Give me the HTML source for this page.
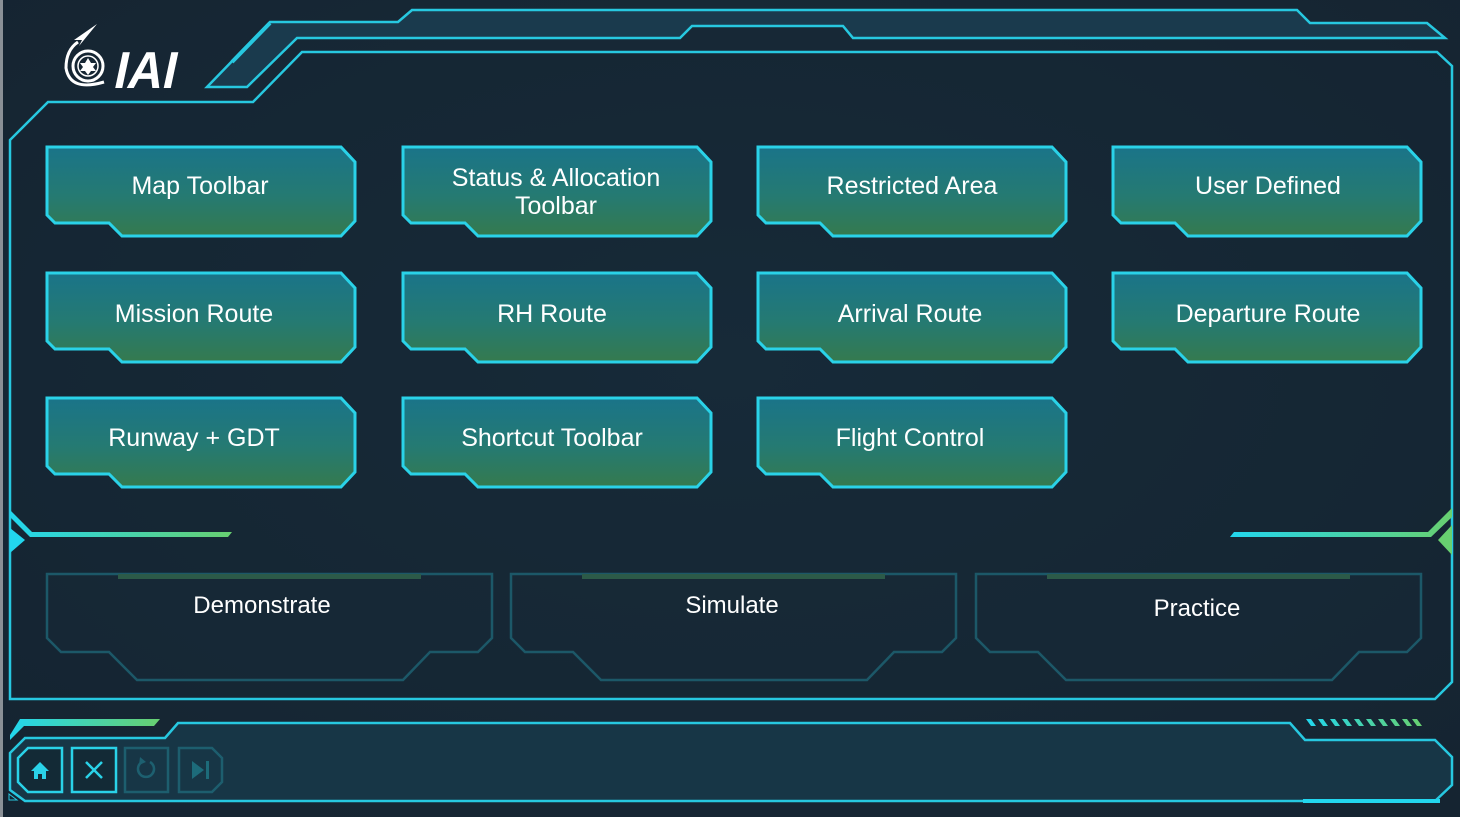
<!DOCTYPE html>
<html><head><meta charset="utf-8"><style>
html,body{margin:0;padding:0;background:#172733;}
svg{display:block;}
text{font-family:"Liberation Sans",sans-serif;fill:#fff;}
</style></head><body>
<svg width="1460" height="817" viewBox="0 0 1460 817" xmlns="http://www.w3.org/2000/svg">
<defs>
<radialGradient id="bg" cx="50%" cy="45%" r="70%"><stop offset="0" stop-color="#1a2e3d"/><stop offset="1" stop-color="#152431"/></radialGradient>
<linearGradient id="btn" x1="0" y1="0" x2="0" y2="1"><stop offset="0" stop-color="#1a7489"/><stop offset="0.55" stop-color="#257a72"/><stop offset="1" stop-color="#357a4e"/></linearGradient>
<linearGradient id="cg" x1="0" y1="0" x2="1" y2="0"><stop offset="0" stop-color="#22d6ee"/><stop offset="1" stop-color="#68d070"/></linearGradient>
<g id="b"><path d="M0,0 L294,0 L308,15 L308,74 L294,89 L75,89 L62,76 L8,76 L0,68 Z" fill="url(#btn)" stroke="#2ad2e8" stroke-width="3"/></g>
<g id="p"><path d="M0,0 L445,0 L445,64 L431,78 L383,78 L356,106 L90,106 L62,78 L14,78 L0,64 Z" fill="#172a38" fill-opacity="0.5" stroke="#1c5868" stroke-width="2.5"/><rect x="71" y="0" width="303" height="5" fill="#2c5a48"/></g>
</defs>
<rect width="1460" height="817" fill="url(#bg)"/>
<rect x="0" y="0" width="3" height="817" fill="#8a9096"/>
<path d="M270,22 L398,22 L412,10 L1297,10 L1310,23 L1427,23 L1445,38 L853,38 L843,26 L692,26 L680,38 L297,38 L247,87 L207,87 Z" fill="#1a3a4d" stroke="#27c8e0" stroke-width="2.5"/>
<line x1="232" y1="62" x2="270" y2="23" stroke="#27c8e0" stroke-width="4"/>
<line x1="694" y1="35" x2="842" y2="35" stroke="url(#cg)" stroke-width="3"/>
<line x1="1313" y1="29" x2="1420" y2="29" stroke="url(#cg)" stroke-width="3"/>
<line x1="198" y1="95" x2="243" y2="95" stroke="url(#cg)" stroke-width="3"/>
<path d="M302,52 L1437,52 L1452,66 L1452,682 L1435,699 L10,699 L10,140 L48,102 L253,102 Z" fill="#142533" fill-opacity="0.45" stroke="#27c8e0" stroke-width="2.5"/>
<g fill="none" stroke="#fff">
<circle cx="88" cy="66" r="15" stroke-width="3"/>
<circle cx="88" cy="66" r="10" stroke-width="1.5"/>
<path d="M104,82 Q70,92 66,68 Q66,50 78,42" stroke-width="3"/>
</g>
<path d="M88,58 L91,63 L96,63 L93,67 L96,71 L91,71 L88,75 L85,71 L80,71 L83,67 L80,63 L85,63 Z" fill="#fff"/>
<path d="M97,24 L74,40 L82,40 L79,46 Z" fill="#fff"/>
<g transform="translate(108,88) skewX(-12)"><text x="4" y="0" font-size="52" font-weight="bold" textLength="62" lengthAdjust="spacingAndGlyphs">IAI</text></g>
<use href="#b" x="47" y="147"/><use href="#b" x="403" y="147"/><use href="#b" x="758" y="147"/><use href="#b" x="1113" y="147"/>
<use href="#b" x="47" y="273"/><use href="#b" x="403" y="273"/><use href="#b" x="758" y="273"/><use href="#b" x="1113" y="273"/>
<use href="#b" x="47" y="398"/><use href="#b" x="403" y="398"/><use href="#b" x="758" y="398"/>
<g font-size="25" text-anchor="middle">
<text x="200" y="194">Map Toolbar</text>
<text x="556" y="186">Status &amp; Allocation</text>
<text x="556" y="214">Toolbar</text>
<text x="912" y="194">Restricted Area</text>
<text x="1268" y="194">User Defined</text>
<text x="194" y="322">Mission Route</text>
<text x="552" y="322">RH Route</text>
<text x="910" y="322">Arrival Route</text>
<text x="1268" y="322">Departure Route</text>
<text x="194" y="446">Runway + GDT</text>
<text x="552" y="446">Shortcut Toolbar</text>
<text x="910" y="446">Flight Control</text>
</g>
<path d="M10,510 L32,532 L232,532 L228,537 L30,537 L10,517 Z" fill="url(#cg)"/>
<path d="M10,528 L25,540 L10,553 Z" fill="#22d6ee"/>
<path d="M1234,532 L1428,532 L1452,508 L1452,517 L1431,537 L1230,537 Z" fill="url(#cg)"/>
<path d="M1452,525 L1438,540 L1452,555 Z" fill="#68d070"/>
<use href="#p" x="47" y="574"/><use href="#p" x="511" y="574"/><use href="#p" x="976" y="574"/>
<g font-size="24" text-anchor="middle">
<text x="262" y="613">Demonstrate</text>
<text x="732" y="613">Simulate</text>
<text x="1197" y="616">Practice</text>
</g>
<path d="M10,753 L25,738 L165,738 L178,723 L1290,723 L1305,740 L1435,740 L1452,757 L1452,785 L1435,801 L25,801 L10,790 Z" fill="#173646" stroke="#27c8e0" stroke-width="2.5"/>
<path d="M10,735 L20,719 L160,719 L154,726 L24,726 L10,740 Z" fill="url(#cg)"/>
<line x1="1303" y1="801" x2="1440" y2="801" stroke="#22d6ee" stroke-width="4"/>
<g fill="url(#cg)">
<path d="M1306,719 h5 l5,7 h-5 Z M1318,719 h5 l5,7 h-5 Z M1330,719 h5 l5,7 h-5 Z M1342,719 h5 l5,7 h-5 Z M1354,719 h5 l5,7 h-5 Z M1366,719 h5 l5,7 h-5 Z M1378,719 h5 l5,7 h-5 Z M1390,719 h5 l5,7 h-5 Z M1402,719 h5 l5,7 h-5 Z M1412,719 h5 l5,7 h-5 Z"/>
</g>
<path d="M28,748 L62,748 L62,792 L28,792 L18,782 L18,758 Z" fill="#132a36" stroke="#2ad2e8" stroke-width="2.5"/>
<path d="M31,771 L40,762 L49,771 L46,771 L46,779 L42,779 L42,774 L38,774 L38,779 L34,779 L34,771 Z" fill="#2ad2e8"/>
<rect x="72" y="748" width="44" height="44" fill="#132a36" stroke="#2ad2e8" stroke-width="2.5"/>
<path d="M86,762 L102,778 M102,762 L86,778" stroke="#2ad2e8" stroke-width="2.5"/>
<rect x="125" y="748" width="43" height="44" fill="none" stroke="#1d5e6e" stroke-width="2.5"/>
<path d="M142,762 A8,8 0 1 0 150,762" fill="none" stroke="#1d6070" stroke-width="2.5"/><path d="M140,757 L146,762 L139,765 Z" fill="#1d6070"/>
<path d="M179,748 L212,748 L222,758 L222,782 L212,792 L179,792 Z" fill="none" stroke="#1d5e6e" stroke-width="2.5"/>
<path d="M192,761 L204,770 L192,779 Z" fill="#1d6b7a"/><rect x="206" y="761" width="3" height="18" fill="#1d6b7a"/>
<path d="M9,794 L17,800 L9,800 Z" fill="none" stroke="#27c8e0" stroke-width="1"/>
</svg>
</body></html>
